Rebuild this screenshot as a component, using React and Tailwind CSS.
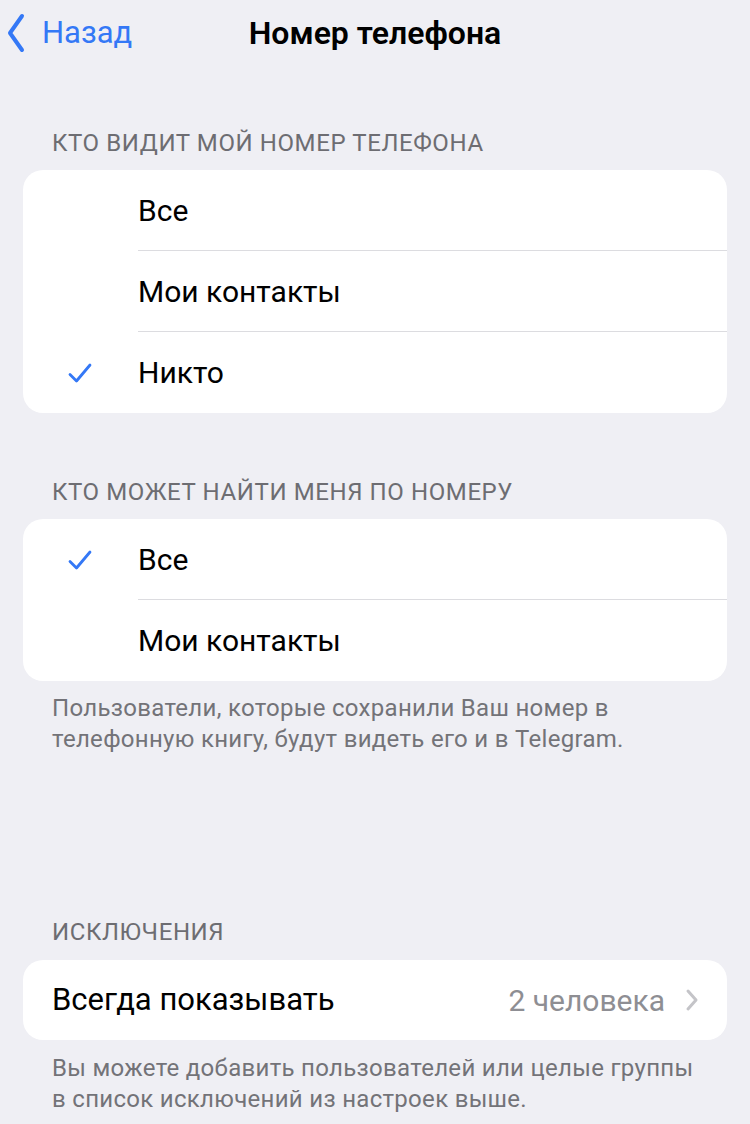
import React from 'react';

function Check() {
  return (
    <svg width="26" height="22" viewBox="0 0 26 22" fill="none">
      <path d="M3 12.5 L9.5 19 L23 3" stroke="#3478f6" strokeWidth="2.8" strokeLinecap="round" strokeLinejoin="round" />
    </svg>
  );
}

function OptionRow({ label, checked, last }) {
  return (
    <div className="flex h-[81px] items-stretch">
      <div className="flex w-[115px] shrink-0 items-center pl-[44px]">
        {checked && <Check />}
      </div>
      <div className={`flex flex-1 items-center ${last ? '' : 'border-b border-[#dcdce0]'}`}>
        <span className="text-[30px] text-black">{label}</span>
      </div>
    </div>
  );
}

function SectionTitle({ children, className = '' }) {
  return (
    <div className={`px-[52px] text-[24px] leading-[30px] uppercase tracking-[0.6px] text-[#6d6d72] ${className}`}>
      {children}
    </div>
  );
}

function Footnote({ children, className = '' }) {
  return (
    <p className={`px-[52px] text-[24px] leading-[31px] tracking-[0.3px] text-[#737378] ${className}`}>
      {children}
    </p>
  );
}

export default function App() {
  return (
    <div className="min-h-[1124px] w-[750px] bg-[#efeff4]" style={{ fontFamily: 'Roboto, "Noto Sans", sans-serif' }}>
      {/* nav bar */}
      <div className="relative flex h-[66px] items-center">
        <div className="flex items-center pl-[7px] text-[#3478f6]">
          <svg width="18" height="40" viewBox="0 0 18 40" fill="none">
            <path d="M15 3 L3 20 L15 37" stroke="#3478f6" strokeWidth="4" strokeLinecap="round" strokeLinejoin="round" />
          </svg>
          <span className="ml-[17px] text-[31px]">Назад</span>
        </div>
        <div className="absolute left-1/2 -translate-x-1/2 text-[32px] font-semibold text-black">
          Номер телефона
        </div>
      </div>

      <SectionTitle className="mt-[62px]">Кто видит мой номер телефона</SectionTitle>
      <div className="mx-[23px] mt-[12px] overflow-hidden rounded-[20px] bg-white">
        <OptionRow label="Все" />
        <OptionRow label="Мои контакты" />
        <OptionRow label="Никто" checked last />
      </div>

      <SectionTitle className="mt-[64px]">Кто может найти меня по номеру</SectionTitle>
      <div className="mx-[23px] mt-[12px] overflow-hidden rounded-[20px] bg-white">
        <OptionRow label="Все" checked />
        <OptionRow label="Мои контакты" last />
      </div>
      <Footnote className="pt-[12px]">
        Пользователи, которые сохранили Ваш номер в<br />
        телефонную книгу, будут видеть его и в Telegram.
      </Footnote>

      <SectionTitle className="mt-[162px]">Исключения</SectionTitle>
      <div className="mx-[23px] mt-[13px] flex h-[80px] items-center rounded-[20px] bg-white pl-[29px] pr-[28px]">
        <span className="flex-1 text-[31px] text-black">Всегда показывать</span>
        <span className="text-[30px] text-[#8e8e93]">2 человека</span>
        <svg className="ml-[20px]" width="14" height="24" viewBox="0 0 14 24" fill="none">
          <path d="M3 3 L11 12 L3 21" stroke="#c4c4c8" strokeWidth="3" strokeLinecap="round" strokeLinejoin="round" />
        </svg>
      </div>
      <Footnote className="pt-[13px]">
        Вы можете добавить пользователей или целые группы<br />
        в список исключений из настроек выше.
      </Footnote>
    </div>
  );
}
